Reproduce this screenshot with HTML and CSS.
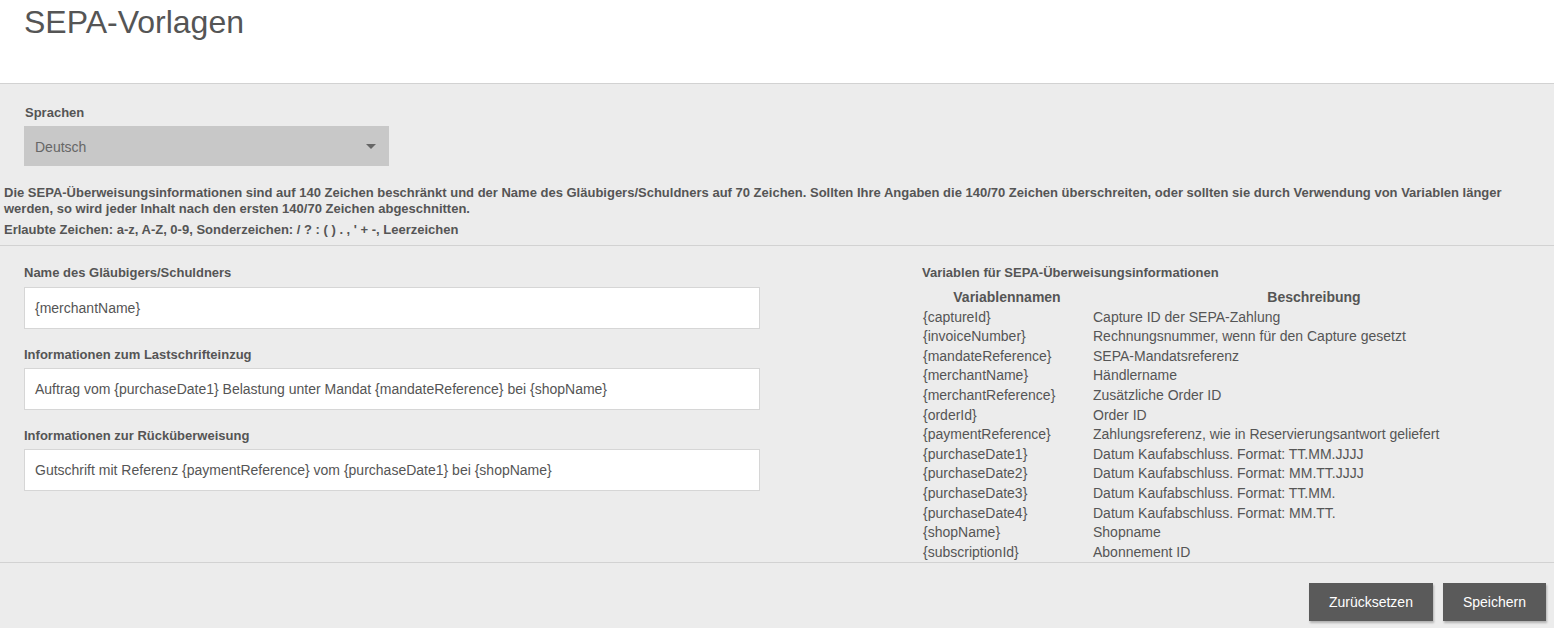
FILE: index.html
```html
<!DOCTYPE html>
<html lang="de">
<head>
<meta charset="utf-8">
<title>SEPA-Vorlagen</title>
<link rel="stylesheet" href="styles.css">
</head>
<body>
<header class="page-header">
  <h1 class="page-title">SEPA-Vorlagen</h1>
</header>
<main class="content">
  <section class="lang-section">
    <label class="field-label">Sprachen</label>
    <div class="select-box">
      <span class="select-value">Deutsch</span>
      <span class="select-arrow"></span>
    </div>
    <p class="info-text">Die SEPA-Überweisungsinformationen sind auf 140 Zeichen beschränkt und der Name des Gläubigers/Schuldners auf 70 Zeichen. Sollten Ihre Angaben die 140/70 Zeichen überschreiten, oder sollten sie durch Verwendung von Variablen länger werden, so wird jeder Inhalt nach den ersten 140/70 Zeichen abgeschnitten.</p>
    <p class="info-text allowed">Erlaubte Zeichen: a-z, A-Z, 0-9, Sonderzeichen: / ? : ( ) . , ' + -, Leerzeichen</p>
  </section>
  <section class="form-section">
    <div class="form-col">
      <div class="field">
        <label class="field-label">Name des Gläubigers/Schuldners</label>
        <div class="text-input">{merchantName}</div>
      </div>
      <div class="field">
        <label class="field-label">Informationen zum Lastschrifteinzug</label>
        <div class="text-input">Auftrag vom {purchaseDate1} Belastung unter Mandat {mandateReference} bei {shopName}</div>
      </div>
      <div class="field">
        <label class="field-label">Informationen zur Rücküberweisung</label>
        <div class="text-input">Gutschrift mit Referenz {paymentReference} vom {purchaseDate1} bei {shopName}</div>
      </div>
    </div>
    <div class="vars-col">
      <div class="field-label vars-title">Variablen für SEPA-Überweisungsinformationen</div>
      <table class="vars-table">
        <colgroup><col class="col-name"><col class="col-desc"></colgroup>
        <thead>
          <tr><th>Variablennamen</th><th>Beschreibung</th></tr>
        </thead>
        <tbody>
          <tr><td>{captureId}</td><td>Capture ID der SEPA-Zahlung</td></tr>
          <tr><td>{invoiceNumber}</td><td>Rechnungsnummer, wenn für den Capture gesetzt</td></tr>
          <tr><td>{mandateReference}</td><td>SEPA-Mandatsreferenz</td></tr>
          <tr><td>{merchantName}</td><td>Händlername</td></tr>
          <tr><td>{merchantReference}</td><td>Zusätzliche Order ID</td></tr>
          <tr><td>{orderId}</td><td>Order ID</td></tr>
          <tr><td>{paymentReference}</td><td>Zahlungsreferenz, wie in Reservierungsantwort geliefert</td></tr>
          <tr><td>{purchaseDate1}</td><td>Datum Kaufabschluss. Format: TT.MM.JJJJ</td></tr>
          <tr><td>{purchaseDate2}</td><td>Datum Kaufabschluss. Format: MM.TT.JJJJ</td></tr>
          <tr><td>{purchaseDate3}</td><td>Datum Kaufabschluss. Format: TT.MM.</td></tr>
          <tr><td>{purchaseDate4}</td><td>Datum Kaufabschluss. Format: MM.TT.</td></tr>
          <tr><td>{shopName}</td><td>Shopname</td></tr>
          <tr><td>{subscriptionId}</td><td>Abonnement ID</td></tr>
        </tbody>
      </table>
    </div>
  </section>
  <footer class="actions">
    <button class="btn" type="button">Zurücksetzen</button>
    <button class="btn" type="button">Speichern</button>
  </footer>
</main>
</body>
</html>
```
FILE: styles.css
```css
* { box-sizing: border-box; }
html, body { margin: 0; padding: 0; }
body {
  font-family: "Liberation Sans", Arial, sans-serif;
  color: #555;
  background: #ececec;
  height: 628px;
  overflow: hidden;
}
.page-header {
  background: #fff;
  height: 84px;
  border-bottom: 1px solid #d2d2d2;
  padding: 4px 24px 0;
}
.page-title {
  margin: 0;
  font-size: 32px;
  font-weight: normal;
  line-height: 37px;
  color: #555;
}
.content { background: #ececec; }
.lang-section {
  padding: 20px 0 7px;
  border-bottom: 1px solid #d2d2d2;
}
.field-label {
  display: block;
  font-size: 13px;
  font-weight: bold;
  line-height: 16px;
  color: #555;
}
.lang-section > .field-label { margin-left: 25px; margin-bottom: 6px; padding-top: 1px; line-height: 15px; }
.select-box {
  margin-left: 24px;
  width: 365px;
  height: 40px;
  background: #c8c8c8;
  display: flex;
  align-items: center;
  justify-content: space-between;
  padding: 1px 13px 0 11px;
}
.select-value { font-size: 14px; color: #666; }
.select-arrow {
  width: 0; height: 0;
  border-left: 5px solid transparent;
  border-right: 5px solid transparent;
  border-top: 5px solid #666;
}
.info-text {
  margin: 19px 0 0;
  padding: 0 14px 0 4px;
  font-size: 13px;
  font-weight: bold;
  line-height: 16px;
  color: #555;
}
.info-text.allowed { margin-top: 5px; }
.form-section {
  display: grid;
  grid-template-columns: 736px 1fr;
  column-gap: 162px;
  padding: 19px 8px 0 24px;
  border-bottom: 1px solid #d2d2d2;
}
.field { margin-bottom: 18px; }
.field .field-label { margin-bottom: 6px; }
.field + .field .field-label { margin-bottom: 5px; }
.text-input {
  height: 42px;
  background: #fff;
  border: 1px solid #d6d6d6;
  padding: 0 10px;
  display: flex;
  align-items: center;
  font-size: 14px;
  color: #555;
}
.vars-title { margin-bottom: 7px; }
.vars-table {
  border-collapse: collapse;
  font-size: 14px;
  color: #555;
}
.col-name { width: 170px; }
.col-desc { width: 444px; }
.vars-table th, .vars-table td {
  padding: 0 1px;
  height: 19.6px;
  line-height: 19.6px;
  white-space: nowrap;
}
.vars-table th { text-align: center; font-weight: bold; }
.vars-table td { text-align: left; }
.actions {
  display: flex;
  justify-content: flex-end;
  gap: 10px;
  padding: 20px 8px 0 0;
}
.btn {
  height: 38px;
  background: #5a5a5a;
  color: #fff;
  border: none;
  border-radius: 0;
  font-family: "Liberation Sans", Arial, sans-serif;
  font-size: 14px;
  padding: 0 20px;
  box-shadow: 1px 2px 2px rgba(0,0,0,0.25);
}
```
